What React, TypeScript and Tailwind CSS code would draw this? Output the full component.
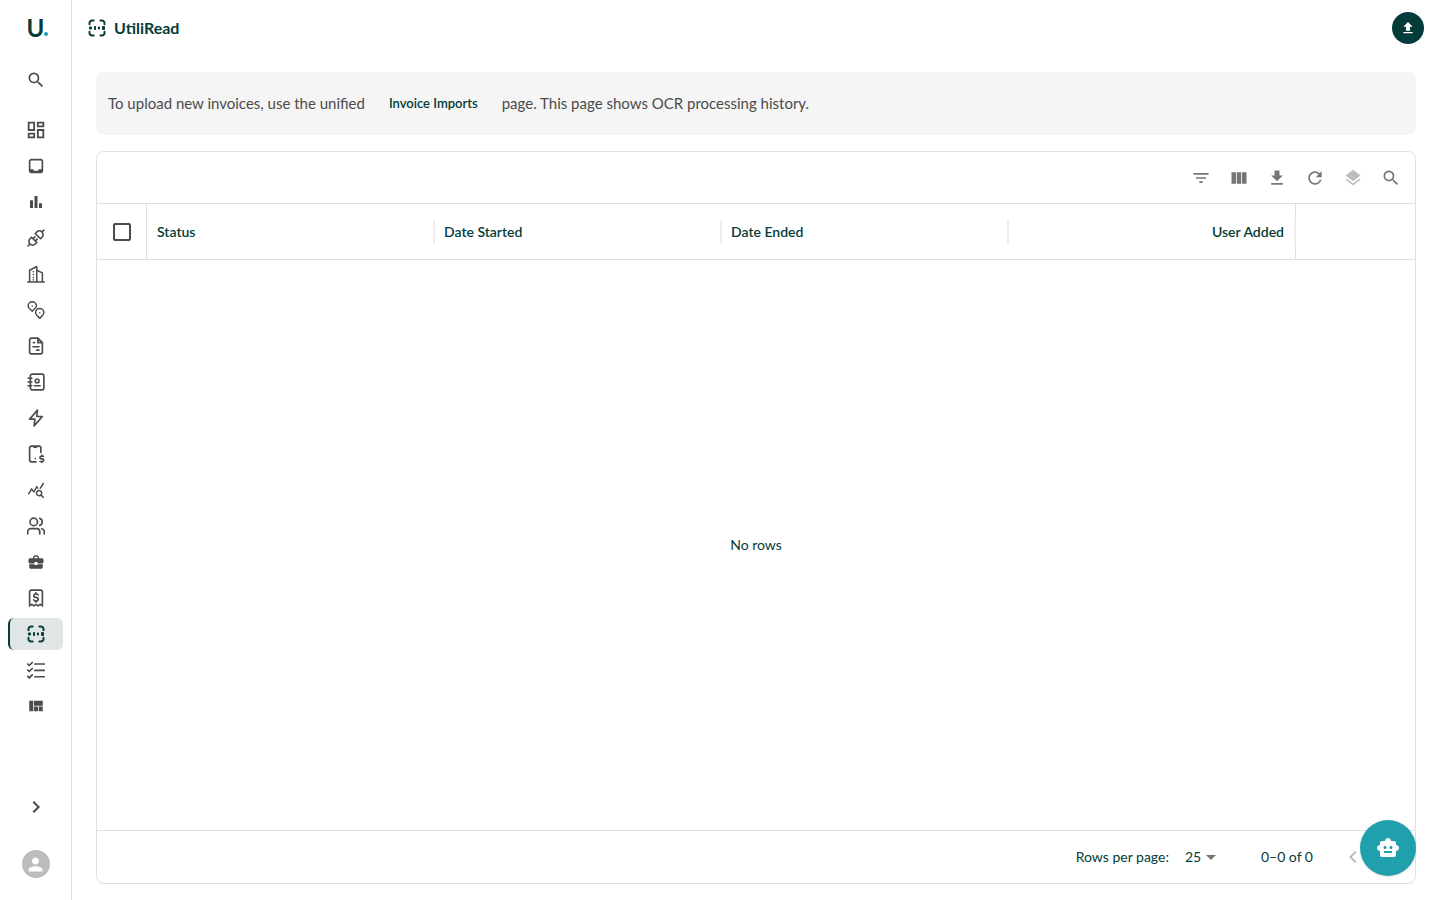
import type { ComponentType, ReactNode } from "react";
import {
  MdArrowDropDown,
  MdBusinessCenter,
  MdChevronLeft,
  MdChevronRight,
  MdDownload,
  MdFileUpload,
  MdFilterList,
  MdLayers,
  MdOutlineDashboard,
  MdPerson,
  MdQueryStats,
  MdRefresh,
  MdSearch,
  MdSmartToy,
  MdViewColumn,
  MdViewQuilt,
} from "react-icons/md";

type IconProps = { className?: string };

function Stroke({ className, children, width = 2 }: IconProps & { children: ReactNode; width?: number }) {
  return (
    <svg
      viewBox="0 0 24 24"
      fill="none"
      stroke="currentColor"
      strokeWidth={width}
      strokeLinecap="round"
      strokeLinejoin="round"
      className={className}
      aria-hidden="true"
    >
      {children}
    </svg>
  );
}

const ScanIcon = ({ className }: IconProps) => (
  <Stroke className={className} width={2.6}>
    <path d="M2 7V5.500A3.500 3.500 0 0 1 5.500 2H7.500M16.500 2H18.500A3.500 3.500 0 0 1 22 5.500V7M22 17V18.500A3.500 3.500 0 0 1 18.500 22H16.500M7.500 22H5.500A3.500 3.500 0 0 1 2 18.500V17" />
    <g fill="currentColor" stroke="none">
      <rect x="1.300" y="10" width="4" height="4" rx="1.300" />
      <rect x="8" y="9.300" width="2.700" height="5.400" rx="1" />
      <rect x="13.300" y="10" width="2.700" height="4" rx="1" />
      <rect x="18.700" y="9.300" width="4" height="5.400" rx="1.300" />
    </g>
  </Stroke>
);

const InboxIcon = ({ className }: IconProps) => (
  <svg viewBox="0 0 24 24" fill="none" stroke="currentColor" strokeWidth="2.2" className={className} aria-hidden="true">
    <rect x="3.500" y="3.500" width="17" height="17" rx="2.500" />
    <path d="M3.500 16.500H8c1 3 7 3 8 0h4.500V20h-17z" fill="currentColor" strokeWidth="0.5" />
  </svg>
);

const BarsIcon = ({ className }: IconProps) => (
  <svg viewBox="0 0 24 24" fill="currentColor" className={className} aria-hidden="true">
    <path d="M4 9.500h4V20H4zM10 4h4v16h-4zM16 13.500h4V20h-4z" />
  </svg>
);

const PlugIcon = ({ className }: IconProps) => (
  <Stroke className={className} width={2.2}>
    <path d="M6 11l7 7-2 2a4.900 4.900 0 0 1-7-7zM18 13l-7-7 2-2a4.900 4.900 0 0 1 7 7zM1.500 22.500L4 20M20 4l2.500-2.500M10.500 10.500L8.500 12.500M13.500 13.500l-2 2" />
  </Stroke>
);

const BuildingIcon = ({ className }: IconProps) => (
  <Stroke className={className} width={2}>
    <path d="M1 22.500h22M3.500 22.500V7l9.500-5v20.500M13 7l7.500 3.500v12" />
    <path d="M8.500 8.500v.5M8.500 12.500v.5M8.500 16.500v.5M8.500 19.500v.5" />
  </Stroke>
);

const PinsIcon = ({ className }: IconProps) => (
  <Stroke className={className} width={2}>
    <path d="M7 13.500C4.500 11 1.500 9.500 1.500 6.500a5.500 5.500 0 0 1 11 0C12.500 9.500 9.500 11 7 13.500zM17 23c-2.500-2.500-5.500-4.500-5.500-7.500a5.500 5.500 0 0 1 11 0c0 3-3 5-5.500 7.500z" />
    <path d="M7 6.500v.1M17 15.500v.1" />
  </Stroke>
);

const FileIcon = ({ className }: IconProps) => (
  <Stroke className={className} width={2.200}>
    <path d="M14.500 1.500H6A2.500 2.500 0 0 0 3.500 4v16A2.500 2.500 0 0 0 6 22.500h12a2.500 2.500 0 0 0 2.500-2.500V7.500zM14.500 1.500v6h6M8.500 7.500h1.500M8 13h8M13 17.500H16" />
  </Stroke>
);

const ContactsIcon = ({ className }: IconProps) => (
  <Stroke className={className} width={2.200}>
    <rect x="4.500" y="1.500" width="18" height="21" rx="2.500" />
    <path d="M1.500 7h5M1.500 12h5M1.500 17h5M10 17h7.500" />
    <circle cx="13.500" cy="10.500" r="2.500" />
  </Stroke>
);

const BoltIcon = ({ className }: IconProps) => (
  <Stroke className={className} width={2.200}>
    <path d="M14 1.500L3.500 13.500H10.500L9.500 22.500L20.500 10H13z" />
  </Stroke>
);

const PhoneBillIcon = ({ className }: IconProps) => (
  <Stroke className={className} width={2.200}>
    <path d="M12 22.500H6A2.500 2.500 0 0 1 3.500 20V4A2.500 2.500 0 0 1 6 1.500h10A2.500 2.500 0 0 1 18.500 4v6M8.500 2c.5 1.500 4.500 1.500 5 0M11 18v.1" />
    <path d="M22 15h-3a1.700 1.700 0 0 0 0 3.500h1.500a1.700 1.700 0 0 1 0 3.500h-3M19.700 13.500V15M19.700 22v1" />
  </Stroke>
);

const UsersIcon = ({ className }: IconProps) => (
  <Stroke className={className} width={2.200}>
    <circle cx="9" cy="6.500" r="5" />
    <path d="M1 22.500V19.500a4 4 0 0 1 4-4h8a4 4 0 0 1 4 4v3M17 1.800a5 5 0 0 1 0 9.400M19.500 15.700a4 4 0 0 1 3.500 4v2.800" />
  </Stroke>
);

const ReceiptIcon = ({ className }: IconProps) => (
  <Stroke className={className} width={2.200}>
    <path d="M3.500 22.500V4A2.500 2.500 0 0 1 6 1.500h12A2.500 2.500 0 0 1 20.500 4v18.500l-3-2-2.700 2-2.800-2-2.800 2-2.700-2z" />
    <path d="M15 8c-.5-1-1.500-1.500-3-1.500-3.800 0-3.800 4.700 0 4.700s3.800 4.700 0 4.700c-1.500 0-2.500-.5-3-1.500M12 5V6.500M12 16v1.500" />
  </Stroke>
);

const ChecklistIcon = ({ className }: IconProps) => (
  <Stroke className={className} width={2.300}>
    <path d="M10.500 4h12.500M10.500 12.500h12.500M10.500 21h12.500M1 4l2 2L7 2M1 12l2 2L7 10M1 20.500l2 2L7 18.500" />
  </Stroke>
);

type NavItem = { label: string; icon: ComponentType<IconProps>; size?: string; active?: boolean };

const navItems: NavItem[] = [
  { label: "Dashboard", icon: MdOutlineDashboard, size: "size-[22px]" },
  { label: "Inbox", icon: InboxIcon },
  { label: "Analytics", icon: BarsIcon },
  { label: "Connections", icon: PlugIcon },
  { label: "Buildings", icon: BuildingIcon },
  { label: "Locations", icon: PinsIcon },
  { label: "Documents", icon: FileIcon },
  { label: "Contacts", icon: ContactsIcon },
  { label: "Energy", icon: BoltIcon },
  { label: "Mobile billing", icon: PhoneBillIcon },
  { label: "Insights", icon: MdQueryStats },
  { label: "Users", icon: UsersIcon },
  { label: "Business", icon: MdBusinessCenter },
  { label: "Invoices", icon: ReceiptIcon },
  { label: "UtiliRead", icon: ScanIcon, active: true },
  { label: "Tasks", icon: ChecklistIcon },
  { label: "Layouts", icon: MdViewQuilt },
];

function Sidebar() {
  return (
    <aside className="flex w-[72px] shrink-0 flex-col border-r border-[#e0e0e0] px-2 text-[#4b4b4b]">
      <a href="#home" aria-label="Home" className="flex h-14 items-center justify-center pl-1 text-[#033c38]">
        <span className="text-2xl leading-6 font-bold">U</span>
        <span className="mt-3 size-1 rounded-full bg-[#1fa0ac]" />
      </a>
      <button type="button" aria-label="Search" className="flex h-12 w-full items-center justify-center">
        <MdSearch className="size-5" />
      </button>
      <nav className="mt-2.5 flex flex-col gap-1">
        {navItems.map(({ label, icon: Icon, size, active }) => (
          <a
            key={label}
            href="#nav"
            aria-label={label}
            aria-current={active ? "page" : undefined}
            className={
              active
                ? "flex h-8 items-center justify-center rounded-md border-l-2 border-[#033c38] bg-[#e0e6e6] pr-px text-[#033c38]"
                : "flex h-8 items-center justify-center rounded-md border-l-2 border-transparent pr-px"
            }
          >
            <Icon className={size ?? "size-[18px]"} />
          </a>
        ))}
      </nav>
      <div className="mt-auto flex flex-col items-center gap-[31px] pb-[22px]">
        <button type="button" aria-label="Expand sidebar">
          <MdChevronRight className="size-6" />
        </button>
        <button
          type="button"
          aria-label="Account"
          className="flex size-7 items-center justify-center rounded-full bg-[#bdbdbd] text-white"
        >
          <MdPerson className="size-[21px]" />
        </button>
      </div>
    </aside>
  );
}

const tools: { label: string; icon: ComponentType<IconProps>; disabled?: boolean }[] = [
  { label: "Show filters", icon: MdFilterList },
  { label: "Select columns", icon: MdViewColumn },
  { label: "Download", icon: MdDownload },
  { label: "Refresh", icon: MdRefresh },
  { label: "Layers", icon: MdLayers, disabled: true },
  { label: "Search rows", icon: MdSearch },
];

const columns = ["Status", "Date Started", "Date Ended", "User Added"];

function HistoryGrid() {
  return (
    <section className="flex flex-1 flex-col rounded-lg border border-[#e0e0e0] text-sm">
      <div className="flex h-[52px] items-center justify-end gap-1 border-b border-[#e0e0e0] px-[7px]">
        {tools.map(({ label, icon: Icon, disabled }) => (
          <button
            key={label}
            type="button"
            aria-label={label}
            disabled={disabled}
            className="flex size-[34px] items-center justify-center text-[#757575] disabled:text-[#bdbdbd]"
          >
            <Icon className="size-5" />
          </button>
        ))}
      </div>
      <table className="w-full table-fixed border-separate border-spacing-0">
        <thead>
          <tr className="h-14">
            <th className="w-[50px] border-r border-b border-[#e0e0e0] p-0">
              <input
                type="checkbox"
                aria-label="Select all rows"
                className="mx-auto block size-[18px] appearance-none rounded-[2px] border-2 border-[#4b4b4b] checked:bg-[#033c38]"
              />
            </th>
            {columns.map((name, i) => (
              <th key={name} className="border-b border-[#e0e0e0] p-0 font-semibold">
                <div className="flex h-6 items-center pl-2.5">
                  <span className={i === 3 ? "ml-auto pr-2.5" : ""}>{name}</span>
                  <span className={i === 3 ? "-mr-px h-6 w-0.5 bg-[#eeeeee]" : "-mr-px ml-auto h-6 w-0.5 bg-[#eeeeee]"} />
                </div>
              </th>
            ))}
            <th aria-label="Actions" className="w-[120px] border-b border-l border-[#e0e0e0] p-0" />
          </tr>
        </thead>
      </table>
      <div className="flex flex-1 items-center justify-center">No rows</div>
      <footer className="flex h-[53px] items-center justify-end border-t border-[#e0e0e0] pr-0.5">
        <label htmlFor="page-size">Rows per page:</label>
        <div className="relative mr-10 ml-4">
          <select id="page-size" defaultValue="25" className="h-8 w-9 appearance-none bg-transparent">
            <option>25</option>
            <option>50</option>
            <option>100</option>
          </select>
          <MdArrowDropDown className="pointer-events-none absolute top-1 -right-0.5 size-6 text-[#757575]" />
        </div>
        <span>0–0 of 0</span>
        <div className="ml-5 flex text-[#bdbdbd]">
          <button type="button" disabled aria-label="Previous page" className="p-2">
            <MdChevronLeft className="size-6" />
          </button>
          <button type="button" disabled aria-label="Next page" className="p-2">
            <MdChevronRight className="size-6" />
          </button>
        </div>
      </footer>
    </section>
  );
}

export default function App() {
  return (
    <div className="flex min-h-screen bg-white font-[Lato,sans-serif] text-[#033c38]">
      <Sidebar />
      <div className="flex min-w-0 flex-1 flex-col">
        <header className="flex h-14 items-center gap-2 px-4">
          <ScanIcon className="size-[18px]" />
          <h1 className="text-base font-bold">UtiliRead</h1>
          <button
            type="button"
            aria-label="Upload"
            className="ml-auto flex size-8 items-center justify-center rounded-full bg-[#033c38] text-white"
          >
            <MdFileUpload className="size-4" />
          </button>
        </header>
        <main className="flex flex-1 flex-col gap-4 px-6 pt-4 pb-4">
          <div className="flex min-h-[63px] flex-wrap items-center gap-6 rounded-lg bg-[#f5f5f5] px-3 text-[15px] text-[#4b4b4b]">
            <p>To upload new invoices, use the unified</p>
            <a href="#imports" className="text-[13px] font-semibold text-[#033c38]">
              Invoice Imports
            </a>
            <p>page. This page shows OCR processing history.</p>
          </div>
          <HistoryGrid />
        </main>
      </div>
      <button
        type="button"
        aria-label="Open assistant"
        className="fixed right-6 bottom-6 flex size-14 items-center justify-center rounded-full bg-[#1fa0ac] text-white shadow-sm"
      >
        <MdSmartToy className="size-6" />
      </button>
    </div>
  );
}
